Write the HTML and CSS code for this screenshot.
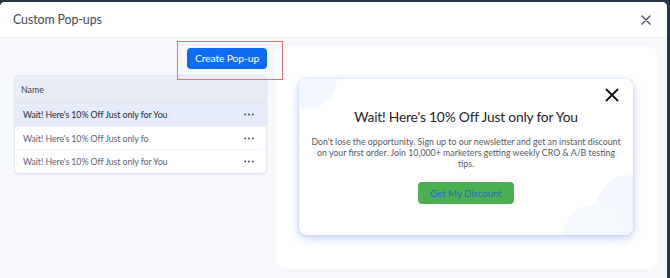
FILE: index.html
```html
<!DOCTYPE html>
<html>
<head>
<meta charset="utf-8">
<link rel="stylesheet" href="styles.css">
</head>
<body>
<div class="backdrop">
  <div class="modal">
    <div class="modal-header">
      <span class="modal-title">Custom Pop-ups</span>
      <svg class="modal-close" width="10" height="10" viewBox="0 0 10 10"><path d="M1 1L9 9M9 1L1 9" stroke="#4a4f5c" stroke-width="1.4" stroke-linecap="round"/></svg>
    </div>
    <div class="modal-body">
      <div class="left-col">
        <div class="btn-row">
          <div class="btn-wrap">
            <button class="btn-primary">Create Pop-up</button>
          </div>
        </div>
        <div class="table">
          <div class="table-head">Name</div>
          <div class="table-row selected"><span>Wait! Here's 10% Off Just only for You</span><svg class="dots" width="10" height="3" viewBox="0 0 10 3"><circle cx="1.2" cy="1.5" r="1"/><circle cx="5" cy="1.5" r="1"/><circle cx="8.8" cy="1.5" r="1"/></svg></div>
          <div class="table-row"><span>Wait! Here's 10% Off Just only fo</span><svg class="dots" width="10" height="3" viewBox="0 0 10 3"><circle cx="1.2" cy="1.5" r="1"/><circle cx="5" cy="1.5" r="1"/><circle cx="8.8" cy="1.5" r="1"/></svg></div>
          <div class="table-row last"><span>Wait! Here's 10% Off Just only for You</span><svg class="dots" width="10" height="3" viewBox="0 0 10 3"><circle cx="1.2" cy="1.5" r="1"/><circle cx="5" cy="1.5" r="1"/><circle cx="8.8" cy="1.5" r="1"/></svg></div>
        </div>
      </div>
      <div class="preview">
        <div class="popup">
          <div class="blob blob-tl"></div>
          <div class="blob blob-br"></div>
          <div class="blob blob-br2"></div>
          <div class="popup-close-row">
            <svg width="14" height="14" viewBox="0 0 14 14"><path d="M1 1L13 13M13 1L1 13" stroke="#111" stroke-width="1.8"/></svg>
          </div>
          <div class="popup-title">Wait! Here's 10% Off Just only for You</div>
          <div class="popup-text">Don't lose the opportunity. Sign up to our newsletter and get an instant discount on your first order. Join 10,000+ marketers getting weekly CRO &amp; A/B testing tips.</div>
          <button class="btn-discount">Get My Discount</button>
        </div>
      </div>
    </div>
  </div>
</div>
</body>
</html>
```
FILE: styles.css
```css
* { box-sizing: border-box; }
html, body { margin: 0; padding: 0; }
body {
  width: 670px;
  height: 278px;
  overflow: hidden;
  font-family: Lato, "Noto Sans", sans-serif;
  background: #2b3442;
}
.backdrop {
  padding: 2px 3px 0 0;
  height: 278px;
}
.modal {
  height: 276px;
  background: #f7f8fc;
  border-radius: 5px 5px 0 0;
  overflow: hidden;
  display: flex;
  flex-direction: column;
}
.modal-header {
  height: 36px;
  flex: none;
  background: #fff;
  border-bottom: 1px solid #e9ebf2;
  display: flex;
  align-items: center;
  justify-content: space-between;
  padding: 0 16px 0 13px;
}
.modal-title {
  font-size: 12.4px;
  color: #454a55;
  letter-spacing: -0.1px;
}
.modal-close { margin-top: 1px; }
.modal-body {
  flex: 1;
  display: flex;
  padding: 8px 10px 9px 14px;
  gap: 9px;
}
.left-col {
  width: 253px;
  flex: none;
  display: flex;
  flex-direction: column;
}
.btn-row {
  display: flex;
  justify-content: flex-end;
  height: 29px;
}
.btn-wrap { position: relative; }
.btn-wrap::after {
  content: "";
  position: absolute;
  left: -10px;
  right: -16px;
  top: -5px;
  bottom: -5px;
  border: 1px solid #e57373;
  pointer-events: none;
  z-index: 3;
}
.btn-primary {
  width: 80px;
  height: 21px;
  border: none;
  border-radius: 4px;
  background: #0e6cf3;
  color: #fff;
  font-family: inherit;
  font-size: 10.4px;
  letter-spacing: -0.15px;
  padding: 0;
  line-height: 21px;
}
.table {
  border: 1px solid #e1e5ee;
  border-radius: 5px;
  overflow: hidden;
  background: #fff;
  box-shadow: 0 1px 2px rgba(40, 60, 110, 0.08);
}
.table-head {
  height: 27px;
  background: #eaedf5;
  border-bottom: 1px solid #dfe3ec;
  font-size: 8.8px;
  color: #3a3f4a;
  padding-left: 6px;
  line-height: 27px;
}
.table-row {
  height: 23px;
  display: flex;
  align-items: center;
  justify-content: space-between;
  padding: 0 12px 0 8px;
  font-size: 8.8px;
  letter-spacing: -0.08px;
  color: #5d6270;
  border-bottom: 1px solid #eceef3;
}
.table-row.last { border-bottom: none; }
.table-row.selected {
  background: #e6ecfc;
  color: #262a35;
  height: 24px;
}
.dots { fill: #4d525d; }
.preview {
  width: 381px;
  flex: none;
  background: #fff;
  border-radius: 10px;
  padding: 33px 24px 0 23px;
}
.popup {
  position: relative;
  width: 334px;
  height: 156px;
  background: #fff;
  border-radius: 8px;
  box-shadow: 0 3px 10px rgba(120, 150, 240, 0.45), 0 0 3px rgba(120, 150, 240, 0.3);
  overflow: hidden;
  display: flex;
  flex-direction: column;
  align-items: center;
}
.blob {
  position: absolute;
  border-radius: 50%;
  background: #f3f7fe;
}
.blob-tl { left: -22px; top: -30px; width: 60px; height: 60px; }
.blob-br { right: -30px; bottom: -30px; width: 70px; height: 90px; background: #f4f8fe; }
.blob-br2 { right: 10px; bottom: -30px; width: 60px; height: 60px; background: #f6f9fe; }
.popup-close-row {
  position: relative;
  align-self: stretch;
  display: flex;
  justify-content: flex-end;
  padding: 9px 14px 0 0;
  height: 24px;
}
.popup-title {
  position: relative;
  font-size: 13.8px;
  letter-spacing: -0.2px;
  color: #1f2229;
  margin-top: 4px;
  line-height: 20px;
}
.popup-text {
  position: relative;
  font-size: 8.8px;
  color: #555a63;
  text-align: center;
  line-height: 11px;
  padding: 0 12px;
  margin-top: 9px;
}
.btn-discount {
  position: relative;
  margin-top: 13px;
  width: 96px;
  height: 22px;
  background: #4caf50;
  border: none;
  border-radius: 4px;
  color: #1b6fc4;
  font-family: inherit;
  font-size: 9.8px;
  letter-spacing: -0.1px;
  padding: 0;
}
```
